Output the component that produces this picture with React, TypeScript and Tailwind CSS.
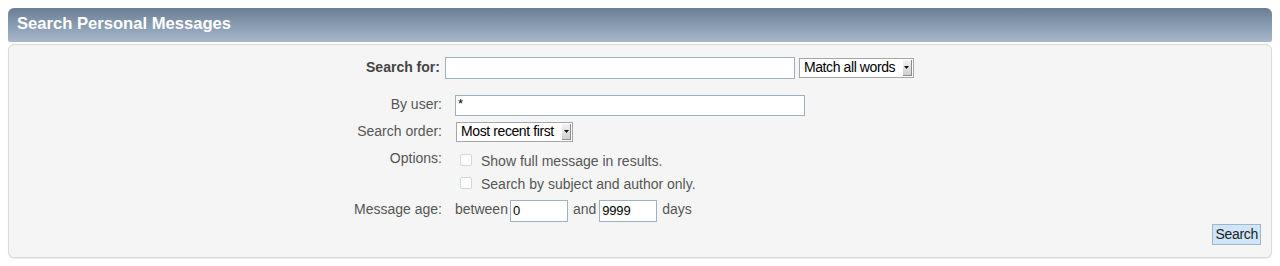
function FakeSelect({ value, width }: { value: string; width: string }) {
  return (
    <div className={`flex items-center h-[20px] bg-white border border-[#a7a7a7] pl-[4px] pr-[1px] ${width}`}>
      <span className="flex-1 text-[14px] tracking-[-0.4px] text-black leading-none truncate mt-[-3px]">{value}</span>
      {/* dropdown arrow button */}
      <span className="flex items-center justify-center w-[9px] h-[16px] bg-gradient-to-b from-[#f4f4f4] to-[#cfcfcf] border-r border-b border-[#8d8d8d]">
        <svg width="5" height="3" viewBox="0 0 5 3">
          <path d="M0 0h5L2.5 3z" fill="#111" />
        </svg>
      </span>
    </div>
  );
}

function TextBox({ value = "", width }: { value?: string; width: string }) {
  return (
    <input
      readOnly
      value={value}
      className={`h-[21px] bg-white border border-[#9fb0c2] px-[2px] pb-[2px] text-[13px] tracking-[-0.2px] text-black outline-none ${width}`}
    />
  );
}

function Check({ label }: { label: string }) {
  return (
    <div className="flex items-center h-[20px]">
      <input
        type="checkbox"
        className="appearance-none w-[12px] h-[12px] ml-[5px] bg-white border border-[#cfd6dc] rounded-[2px]"
      />
      <span className="ml-[9px] mt-[3px] text-[14px] text-[#555]">{label}</span>
    </div>
  );
}

export default function App() {
  return (
    <div className="bg-white pt-[8px] px-[8px] pb-[9px] font-['Liberation_Sans',Arial,sans-serif]">
      {/* Category bar */}
      <div className="h-[34px] flex items-center px-[9px] rounded-t-[6px] rounded-b-[2px] bg-gradient-to-b from-[#6b7f94] to-[#a7b8cd]">
        <h3 className="text-white font-bold text-[16.6px] leading-none mt-[-2px]">Search Personal Messages</h3>
      </div>

      {/* Panel */}
      <div className="mt-[2px] h-[214px] bg-[#f5f5f5] border border-[#dadada] rounded-[6px] shadow-[0_1px_1px_rgba(0,0,0,0.08)] pt-[12px]">
        <div className="flex justify-center items-center">
          <b className="text-[14px] text-[#444] mt-[-2px]">Search for:</b>
          <TextBox width="w-[350px] ml-[5px] h-[22px]" />
          <div className="ml-[4px]">
            <FakeSelect value="Match all words" width="w-[115px]" />
          </div>
        </div>

        <div className="mt-[16px] flex flex-col text-[14px] text-[#555]">
          <div className="flex items-center h-[21px]">
            <span className="w-[433px] text-right mt-[-3px]">By user:</span>
            <TextBox value="*" width="w-[350px] ml-[13px] h-[21px] pb-[5px]" />
          </div>
          <div className="flex items-center h-[20px] mt-[6px]">
            <span className="w-[433px] text-right mt-[-2px]">Search order:</span>
            <div className="ml-[14px]">
              <FakeSelect value="Most recent first" width="w-[117px]" />
            </div>
          </div>
          <div className="flex mt-[8px]">
            <span className="w-[433px] text-right leading-[17px]">Options:</span>
            <div className="ml-[13px] flex flex-col gap-[3px]">
              <Check label="Show full message in results." />
              <Check label="Search by subject and author only." />
            </div>
          </div>
          <div className="flex items-center h-[22px] mt-[7px]">
            <span className="w-[433px] text-right mt-[-3px]">Message age:</span>
            <span className="ml-[13px] mt-[-3px]">between</span>
            <TextBox value="0" width="w-[58px] ml-[2px] h-[22px]" />
            <span className="ml-[5px] mt-[-3px]">and</span>
            <TextBox value="9999" width="w-[58px] ml-[3px] h-[22px]" />
            <span className="ml-[5px] mt-[-3px]">days</span>
          </div>
        </div>

        <div className="flex justify-end mt-[2px] pr-[10px]">
          <button className="h-[21px] px-[2px] pb-[2px] bg-[#cfe5fa] border border-[#a3b5c6] text-[14px] tracking-[-0.3px] text-[#222] leading-none">
            Search
          </button>
        </div>
      </div>
    </div>
  );
}
